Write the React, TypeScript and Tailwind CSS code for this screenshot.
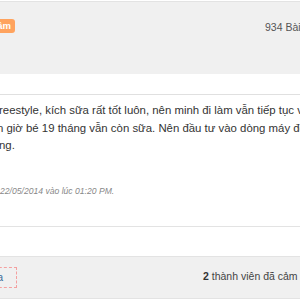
export default function App() {
  return (
    <div
      className="w-[300px] h-[300px] overflow-hidden bg-white text-[#333]"
      style={{ fontFamily: '"Liberation Sans", Arial, sans-serif' }}
    >
      {/* Post header */}
      <div className="mt-[1px] h-[73px] border-t border-[#e3e3e3] bg-[#f0f0f0] flex items-start pt-[17px]">
        <div className="w-[15px] flex justify-end">
          <span className="shrink-0 rounded-[3px] bg-[#ffa35e] px-[4px] h-[14px] leading-[14px] text-[9.5px] font-bold text-white whitespace-nowrap">
            Tư vấn viên tận tâm
          </span>
        </div>
        <span className="ml-auto w-[35px] mt-[1px] text-[10.5px] text-[#555] whitespace-nowrap">934 Bài viết</span>
      </div>

      <div className="h-[21px] border-b border-[#e0e0e0]" />

      {/* Post body */}
      <div className="pt-[7px] text-[11.4px] leading-[17.5px] text-[#333] whitespace-nowrap">
        <div className="-ml-[1px]">reestyle, kích sữa rất tốt luôn, nên minh đi làm vẫn tiếp tục vắt sữa</div>
        <div className="-ml-[3px]">n giờ bé 19 tháng vẫn còn sữa. Nên đầu tư vào dòng máy đôi</div>
        <div className="-ml-[1px]">ng.</div>
      </div>

      <div className="mt-[29px] h-[14px] leading-[14px] text-[8.6px] italic text-[#888] whitespace-nowrap">
        22/05/2014 vào lúc 01:20 PM.
      </div>

      <div className="mt-[28px] h-[31px] border-y border-[#e3e3e3]" />

      {/* Thanks bar */}
      <div className="h-[42px] border-b border-[#e3e3e3] bg-[#f0f0f0] flex items-center">
        <div className="w-[17px] flex justify-end">
          <span className="shrink-0 h-[21px] border border-dashed border-[#f4a0a0] pl-[4px] pr-[13px] leading-[19px] text-[10.5px] text-[#3a6d99] whitespace-nowrap">
            Cảm ơn Ala
          </span>
        </div>
        <span className="ml-auto w-[97px] text-[10.5px] text-[#444] whitespace-nowrap">
          <b className="text-[#333]">2</b> thành viên đã cảm ơn
        </span>
      </div>
    </div>
  );
}
